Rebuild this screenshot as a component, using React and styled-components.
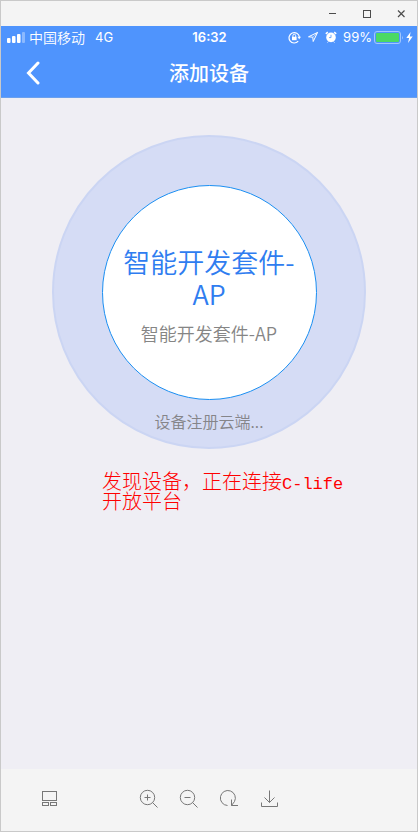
import React from "react";
import styled, { createGlobalStyle } from "styled-components";

const GlobalStyle = createGlobalStyle`
  *, *::before, *::after { box-sizing: border-box; }
  body {
    margin: 0;
    font-family: Inter, "Noto Sans CJK SC", sans-serif;
  }
  button {
    margin: 0;
    padding: 0;
    border: 0;
    background: none;
    color: inherit;
    font: inherit;
    cursor: pointer;
  }
  svg { display: block; }
`;

const Window = styled.div`
  display: flex;
  flex-direction: column;
  min-height: 100vh;
  border: 1px solid #c9c9c9;
  background: #f4f4f4;
`;

const TitleBar = styled.header`
  display: flex;
  justify-content: flex-end;
  height: 25px;
  color: #4c4c4c;
`;

const WindowButton = styled.button`
  display: grid;
  place-items: center;
  width: 34px;
  height: 24px;
`;

const Screen = styled.main`
  flex: 1;
  display: flex;
  flex-direction: column;
  background: #efeef4;
`;

const AppHeader = styled.div`
  background: #4f94fd;
  border-bottom: 1px solid #6ba0ee;
  color: #fff;
`;

const StatusBar = styled.div`
  display: grid;
  grid-template-columns: 1fr auto 1fr;
  align-items: center;
  height: 22px;
  padding: 0 4px 0 5px;
  font-size: 13px;
  line-height: 20px;
`;

const StatusGroup = styled.div`
  display: flex;
  align-items: center;
  justify-content: ${(p) => (p.$end ? "flex-end" : "flex-start")};
  gap: ${(p) => p.$gap}px;
`;

const Carrier = styled.span`
  margin-right: 6px;
  font-family: "Noto Sans CJK SC", sans-serif;
  font-size: 14px;
  font-weight: 350;
  line-height: 18px;
`;

const Clock = styled.time`
  font-weight: 600;
`;

const NavBar = styled.div`
  display: grid;
  grid-template-columns: 64px 1fr 64px;
  align-items: center;
  height: 49px;
`;

const BackButton = styled.button`
  display: grid;
  place-items: center;
  height: 44px;
`;

const NavTitle = styled.h1`
  margin: 0;
  font-family: "Noto Sans CJK SC", sans-serif;
  font-size: 20px;
  font-weight: 500;
  line-height: 28px;
  text-align: center;
`;

const Content = styled.div`
  display: flex;
  flex-direction: column;
  align-items: center;
  padding: 37px 0 24px;
`;

const Halo = styled.section`
  display: flex;
  flex-direction: column;
  align-items: center;
  gap: 9px;
  width: 314px;
  height: 314px;
  padding-top: 48px;
  border: 2px solid #cbd5f3;
  border-radius: 50%;
  background: #d5dcf5;
  font-family: "Noto Sans CJK SC", sans-serif;
  font-weight: 350;
  text-align: center;
`;

const Disc = styled.div`
  display: flex;
  flex-direction: column;
  align-items: center;
  gap: 11px;
  width: 215px;
  height: 215px;
  padding: 60px 16px 0;
  border: 1px solid #1b8ff2;
  border-radius: 50%;
  background: #fff;
`;

const DeviceName = styled.h2`
  margin: 0;
  color: #2f7df0;
  font-size: 27px;
  font-weight: 350;
  line-height: 32px;
`;

const DeviceModel = styled.p`
  margin: 0;
  color: #858585;
  font-size: 18px;
  line-height: 24px;
`;

const Progress = styled.p`
  margin: 0;
  color: #858589;
  font-size: 16px;
  line-height: 24px;
`;

const Notice = styled.p`
  width: 244px;
  margin: 25px 0 0 30px;
  color: #ff0000;
  font-family: "Liberation Mono", "Noto Sans CJK SC", monospace;
  font-size: 20px;
  font-weight: 300;
  line-height: 20px;
`;

const Brand = styled.span`
  font-size: 17px;
  line-height: 16px;
`;

const Toolbar = styled.footer`
  display: flex;
  align-items: center;
  height: 62px;
  padding: 0 28px 3px;
  color: #777;
`;

const Tools = styled.div`
  display: flex;
  margin-left: 60px;
`;

const ToolButton = styled.button`
  display: grid;
  place-items: center;
  width: 40px;
  height: 40px;
`;

const Stroke = ({ width = 20, height = 20, weight = 1, children }) => (
  <svg
    width={width}
    height={height}
    viewBox={`0 0 ${width} ${height}`}
    fill="none"
    stroke="currentColor"
    strokeWidth={weight}
    aria-hidden="true"
  >
    {children}
  </svg>
);

const SignalIcon = () => (
  <svg width="19" height="12" viewBox="0 0 19 12" fill="#fff" aria-hidden="true">
    <rect x="1" y="7" width="3.5" height="5" rx="1" />
    <rect x="6" y="5" width="3.5" height="7" rx="1" />
    <rect x="11" y="3" width="3.5" height="9" rx="1" />
    <rect x="16" y="1" width="3" height="11" rx="1" opacity="0.35" />
  </svg>
);

const RotationLockIcon = () => (
  <Stroke width={13} height={13} weight={1.2}>
    <path d="M10.2 10.2A5.2 5.2 0 1 1 11.4 6" />
    <path d="M9.4 5.8h3.6l-1.8 2.5z" fill="currentColor" stroke="none" />
    <rect x="4" y="5.8" width="4.6" height="3.4" fill="currentColor" stroke="none" />
    <path d="M4.9 6V4.7a1.4 1.4 0 0 1 2.8 0V6" strokeWidth="1" />
  </Stroke>
);

const LocationIcon = () => (
  <Stroke width={12} height={12}>
    <path d="M1.5 5.8 10.6 1.4 6.2 10.5 5.8 6.2z" strokeLinejoin="round" />
    <path d="M6.2 6 10.6 1.4" strokeWidth=".6" />
  </Stroke>
);

const AlarmIcon = () => (
  <Stroke width={12} height={12} weight={1.5}>
    <circle cx="6" cy="6.4" r="4.8" fill="currentColor" stroke="none" />
    <path d="M.8 2.9 2.8 1.1M9.2 1.1l2 1.8" />
    <path d="m2.6 11.5.8-1M9.4 11.5l-.8-1" strokeWidth="1" />
    <path d="M6 3.8v2.8H4" stroke="#4f94fd" strokeWidth=".8" />
  </Stroke>
);

const BatteryIcon = () => (
  <svg width="30" height="13" viewBox="0 0 30 13" aria-hidden="true">
    <rect x=".5" y=".5" width="26" height="12" rx="2.5" fill="none" stroke="#a3c7fc" />
    <rect x="2" y="2" width="23" height="9" rx="1" fill="#4bd964" />
    <path d="M28 4.5q1.5 2 0 4z" fill="#a3c7fc" />
  </svg>
);

const BoltIcon = () => (
  <svg width="7" height="11" viewBox="0 0 7 11" fill="#fff" aria-hidden="true">
    <path d="M4.6 0 .3 6h2.8L2 11 6.7 4.6H3.8z" />
  </svg>
);

export default function App() {
  return (
    <>
      <GlobalStyle />
      <Window>
        <TitleBar>
          <WindowButton aria-label="最小化">
            <Stroke width={9} height={9}><path d="M1 4.5h7" /></Stroke>
          </WindowButton>
          <WindowButton aria-label="最大化">
            <Stroke width={9} height={9}><rect x="1.5" y="1.5" width="7" height="7" /></Stroke>
          </WindowButton>
          <WindowButton aria-label="关闭">
            <Stroke width={9} height={9} weight={1.2}><path d="m2 1.5 6.5 6.5M8.500 1.500 2 8" /></Stroke>
          </WindowButton>
        </TitleBar>

        <Screen>
          <AppHeader>
            <StatusBar>
              <StatusGroup $gap={4}>
                <SignalIcon />
                <Carrier>中国移动</Carrier>
                <span>4G</span>
              </StatusGroup>
              <Clock>16:32</Clock>
              <StatusGroup $end $gap={2}>
                <StatusGroup $gap={6}>
                  <RotationLockIcon />
                  <LocationIcon />
                  <AlarmIcon />
                  <span>99%</span>
                </StatusGroup>
                <BatteryIcon />
                <BoltIcon />
              </StatusGroup>
            </StatusBar>
            <NavBar>
              <BackButton aria-label="返回">
                <Stroke width={14} height={24} weight={3}>
                  <path d="M12 2 2.5 12 12 22" strokeLinecap="round" />
                </Stroke>
              </BackButton>
              <NavTitle>添加设备</NavTitle>
            </NavBar>
          </AppHeader>

          <Content>
            <Halo>
              <Disc>
                <DeviceName>智能开发套件-AP</DeviceName>
                <DeviceModel>智能开发套件-AP</DeviceModel>
              </Disc>
              <Progress>设备注册云端...</Progress>
            </Halo>
            <Notice>
              发现设备，正在连接<Brand>C-life</Brand>开放平台
            </Notice>
          </Content>
        </Screen>

        <Toolbar>
          <ToolButton aria-label="布局">
            <Stroke width={16} height={16}>
              <rect x="1.5" y=".5" width="14" height="9" />
              <rect x="1.5" y="11.5" width="6" height="3" />
              <rect x="9.5" y="11.5" width="6" height="3" />
            </Stroke>
          </ToolButton>
          <Tools>
            <ToolButton aria-label="放大">
              <Stroke>
                <circle cx="8.5" cy="8.5" r="7.2" />
                <path d="m13.5 13.5 5 5M5.5 8.5h6M8.5 5.5v6" />
              </Stroke>
            </ToolButton>
            <ToolButton aria-label="缩小">
              <Stroke>
                <circle cx="8.5" cy="8.5" r="7.2" />
                <path d="m13.5 13.5 5 5M5.5 8.5h6" />
              </Stroke>
            </ToolButton>
            <ToolButton aria-label="旋转">
              <Stroke>
                <path d="M8.5 16.5A7.5 7.5 0 1 1 15.5 12.5" />
                <path d="M12.5 10.5v6H19M12.5 16.5l3-4" />
              </Stroke>
            </ToolButton>
            <ToolButton aria-label="下载">
              <Stroke>
                <path d="M10.5 1.5v12M5.500 8.500l5 5 5-5M2.500 13.500v4h16v-4" />
              </Stroke>
            </ToolButton>
          </Tools>
        </Toolbar>
      </Window>
    </>
  );
}
